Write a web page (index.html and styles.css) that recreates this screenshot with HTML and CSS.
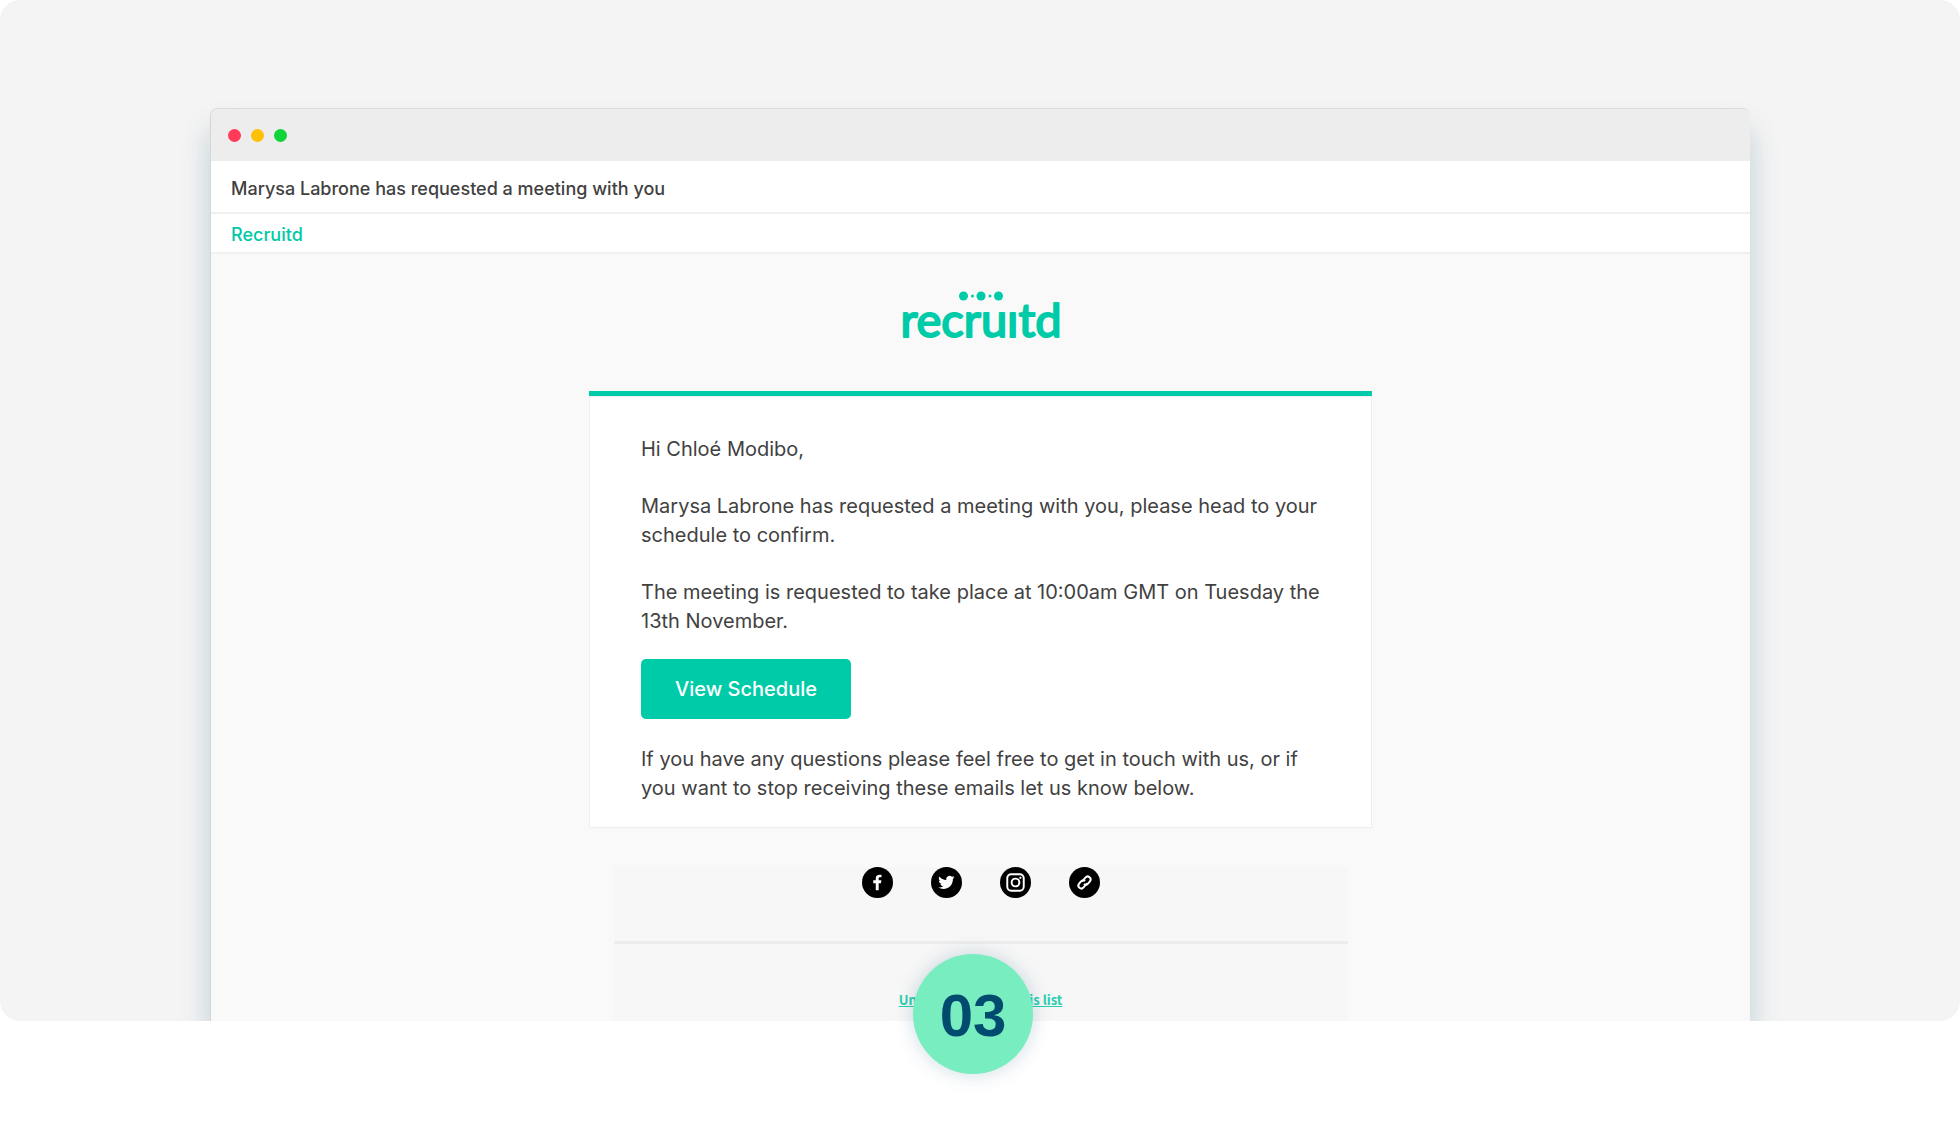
FILE: index.html
```html
<!DOCTYPE html>
<html lang="en">
<head>
    <meta charset="UTF-8">
    <meta name="viewport" content="width=device-width, initial-scale=1.0">
    <title>Recruitd - Meeting request</title>
    <link rel="stylesheet" href="styles.css">
</head>
<body>

<main class="step">
    <div class="stage">
        <div class="window">
            <div class="title-bar">
                <span class="dot red"></span>
                <span class="dot yellow"></span>
                <span class="dot green"></span>
            </div>
            <h1 class="subject">Marysa Labrone has requested a meeting with you</h1>
            <div class="sender">Recruitd</div>

            <div class="email">
                <svg class="logo" width="180" height="64" viewBox="0 0 180 64" role="img" aria-label="recruitd">
                    <circle cx="72.500" cy="8" r="4.5"/>
                    <circle cx="81.500" cy="8" r="1.5"/>
                    <circle cx="90" cy="8" r="4.5"/>
                    <circle cx="99" cy="8" r="1.5"/>
                    <circle cx="107.500" cy="8" r="4.5"/>
                    <text class="logo-text" x="90" y="49" text-anchor="middle">recruıtd</text>
                </svg>

                <div class="card">
                    <p>Hi Chloé Modibo,</p>
                    <p>Marysa Labrone has requested a meeting with you, please head to your schedule to confirm.</p>
                    <p>The meeting is requested to take place at 10:00am GMT on Tuesday the 13th November.</p>
                    <button class="schedule-button" type="button">View Schedule</button>
                    <p>If you have any questions please feel free to get in touch with us, or if you want to stop receiving these emails let us know below.</p>
                </div>

                <footer class="email-footer">
                    <div class="social">
                        <a href="#" aria-label="Facebook">
                            <svg width="31" height="31" viewBox="0 0 32 32">
                                <circle cx="16" cy="16" r="16"/>
                                <path class="fill" d="M14.200 24v-7.300H11.600v-3h2.600v-1.900c0-2.600 1.500-3.900 3.800-3.900 1 0 1.900.1 2.100.1v2.600h-1.500c-1.200 0-1.400.6-1.400 1.400v1.700h2.800l-.4 3h-2.400V24z"/>
                            </svg>
                        </a>
                        <a href="#" aria-label="Twitter">
                            <svg width="31" height="31" viewBox="0 0 32 32">
                                <circle cx="16" cy="16" r="16"/>
                                <path class="fill" transform="translate(7.500 7.500) scale(.7)" d="M23.950 4.570a10 10 0 0 1-2.820.770 4.960 4.960 0 0 0 2.160-2.720c-.95.550-2 .950-3.130 1.180a4.920 4.920 0 0 0-8.380 4.480C7.690 8.100 4.070 6.130 1.640 3.160a4.920 4.920 0 0 0 1.520 6.570 4.900 4.900 0 0 1-2.230-.610v.060a4.920 4.920 0 0 0 3.950 4.830 5 5 0 0 1-2.210.080 4.940 4.940 0 0 0 4.600 3.420A9.870 9.870 0 0 1 0 19.540a13.990 13.990 0 0 0 7.550 2.210c9.050 0 14-7.500 14-13.980 0-.210 0-.420-.020-.630a9.940 9.940 0 0 0 2.420-2.570z"/>
                            </svg>
                        </a>
                        <a href="#" aria-label="Instagram">
                            <svg width="31" height="31" viewBox="0 0 32 32">
                                <circle cx="16" cy="16" r="16"/>
                                <rect class="line" x="7.500" y="7.500" width="17" height="17" rx="4"/>
                                <circle class="line" cx="16" cy="16" r="4"/>
                                <circle class="fill" cx="21" cy="11.200" r="1.200"/>
                            </svg>
                        </a>
                        <a href="#" aria-label="Website">
                            <svg width="31" height="31" viewBox="0 0 32 32">
                                <circle cx="16" cy="16" r="16"/>
                                <!-- two chain links, tilted -->
                                <g class="line" transform="rotate(-50 16 16)">
                                    <path d="M17 18.500h-5.500a3 3 0 0 1 0-6h3a3 3 0 0 1 3 3"/>
                                    <path d="M15 13.500h5.500a3 3 0 0 1 0 6h-3a3 3 0 0 1-3-3"/>
                                </g>
                            </svg>
                        </a>
                    </div>
                    <a class="unsubscribe" href="#">Unsubscribe from this list</a>
                </footer>
            </div>
        </div>
    </div>
    <div class="step-number">03</div>
</main>

</body>
</html>
```
FILE: styles.css
```css
body {
    font-family: Inter, Arial, sans-serif;
    background-color: #fff;
    color: #414141;
    margin: 0;
}

.step {
    position: relative;
    padding-bottom: 112px;
}

.stage {
    background-color: #f4f4f4;
    border-radius: 20px;
    padding: 108px 210px 0;
    overflow: hidden;
}

/* Browser window */
.window {
    background-color: #f9f9f9;
    border-top: 1px solid #d9dadb;
    border-left: 1px solid #d3d7d9;
    border-radius: 8px 8px 0 0;
    box-shadow: 0 22px 30px rgba(0, 75, 110, 0.22);
}

.title-bar {
    display: flex;
    align-items: center;
    gap: 10px;
    height: 52px;
    padding-left: 17px;
    background-color: #ededed;
    border-radius: 8px 8px 0 0;
}

.dot {
    width: 13px;
    height: 13px;
    border-radius: 50%;
}

.red {
    background-color: #ff3b58;
}

.yellow {
    background-color: #ffc107;
}

.green {
    background-color: #10d43a;
}

.subject, .sender {
    margin: 0;
    padding: 0 20px;
    background-color: #fff;
    border-bottom: 2px solid #f0f0f0;
    font-size: 18px;
    font-weight: 500;
}

.subject {
    padding-top: 4px;
    line-height: 47px;
}

.sender {
    padding-top: 4px;
    line-height: 34px;
    color: #00c9a7;
}

/* Email */
.email {
    display: flex;
    flex-direction: column;
    align-items: center;
    padding: 34px 20px 0;
}

.logo {
    fill: #00cba8;
}

.logo-text {
    font-family: Lato, sans-serif;
    font-size: 47px;
    stroke: #00cba8;
    stroke-width: 2px;
    stroke-linejoin: round;
}

.card {
    box-sizing: border-box;
    width: 100%;
    max-width: 783px;
    margin-top: 39px;
    padding: 39px 50px 25px 52px;
    background-color: #fff;
    border-top: 5px solid #00cba8;
    box-shadow: inset 0 0 0 1px #eee;
    font-size: 20px;
    line-height: 29px;
}

.card p {
    margin: 0 0 28px;
}

.card p:last-child {
    margin: 0;
}

.schedule-button {
    display: block;
    width: 210px;
    height: 60px;
    margin: -5px 0 26px;
    border: none;
    border-radius: 5px;
    background-color: #00cba8;
    color: #fff;
    font-family: inherit;
    font-size: 20px;
    font-weight: 500;
    cursor: pointer;
}

.email-footer {
    width: 100%;
    max-width: 734px;
    margin-top: 39px;
    background-color: #f7f7f7;
    text-align: center;
}

.social {
    display: flex;
    justify-content: center;
    gap: 38px;
    padding-bottom: 43px;
    border-bottom: 3px solid #ededed;
}

.social a, .social svg {
    display: block;
}

.fill {
    fill: #fff;
}

.line {
    fill: none;
    stroke: #fff;
    stroke-width: 2px;
}

.unsubscribe {
    display: block;
    padding: 45px 0 10px;
    color: #2bcfb0;
    font-family: "Noto Sans CJK SC", sans-serif;
    font-size: 13px;
    font-weight: bold;
    line-height: 22px;
}

/* Step badge, hangs over the bottom edge of the stage */
.step-number {
    position: absolute;
    left: calc(50% - 67px);
    bottom: 59px;
    width: 120px;
    height: 120px;
    border-radius: 50%;
    background-color: #78edc0;
    box-shadow: 0 0 20px rgba(0, 75, 110, 0.2);
    color: #004b6e;
    font-family: "Liberation Sans", Arial, sans-serif;
    font-size: 60px;
    font-weight: bold;
    line-height: 124px;
    text-align: center;
}
```
